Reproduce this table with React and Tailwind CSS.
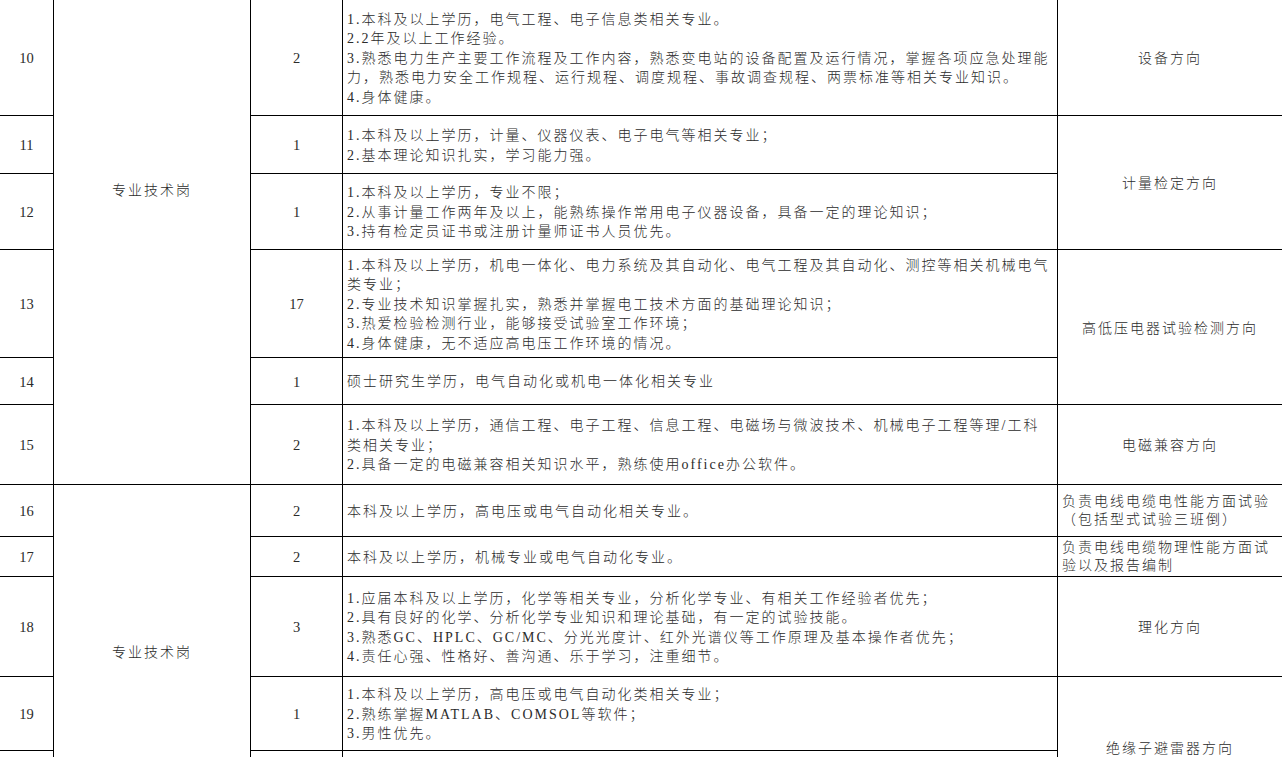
import React from "react";

const FONT = { fontFamily: '"Liberation Serif", "Noto Sans CJK SC", serif' };

const ROW_START = [
  "row-start-1",
  "row-start-2",
  "row-start-3",
  "row-start-4",
  "row-start-5",
  "row-start-6",
  "row-start-7",
  "row-start-8",
  "row-start-9",
  "row-start-10",
  "row-start-11",
];

const rows = [
  {
    no: "10",
    count: "2",
    req: [
      "1.本科及以上学历，电气工程、电子信息类相关专业。",
      "2.2年及以上工作经验。",
      "3.熟悉电力生产主要工作流程及工作内容，熟悉变电站的设备配置及运行情况，掌握各项应急处理能",
      "力，熟悉电力安全工作规程、运行规程、调度规程、事故调查规程、两票标准等相关专业知识。",
      "4.身体健康。",
    ],
  },
  {
    no: "11",
    count: "1",
    req: ["1.本科及以上学历，计量、仪器仪表、电子电气等相关专业；", "2.基本理论知识扎实，学习能力强。"],
  },
  {
    no: "12",
    count: "1",
    req: [
      "1.本科及以上学历，专业不限；",
      "2.从事计量工作两年及以上，能熟练操作常用电子仪器设备，具备一定的理论知识；",
      "3.持有检定员证书或注册计量师证书人员优先。",
    ],
  },
  {
    no: "13",
    count: "17",
    req: [
      "1.本科及以上学历，机电一体化、电力系统及其自动化、电气工程及其自动化、测控等相关机械电气",
      "类专业；",
      "2.专业技术知识掌握扎实，熟悉并掌握电工技术方面的基础理论知识；",
      "3.热爱检验检测行业，能够接受试验室工作环境；",
      "4.身体健康，无不适应高电压工作环境的情况。",
    ],
  },
  { no: "14", count: "1", req: ["硕士研究生学历，电气自动化或机电一体化相关专业"] },
  {
    no: "15",
    count: "2",
    req: [
      "1.本科及以上学历，通信工程、电子工程、信息工程、电磁场与微波技术、机械电子工程等理/工科",
      "类相关专业；",
      "2.具备一定的电磁兼容相关知识水平，熟练使用office办公软件。",
    ],
  },
  { no: "16", count: "2", req: ["本科及以上学历，高电压或电气自动化相关专业。"] },
  { no: "17", count: "2", req: ["本科及以上学历，机械专业或电气自动化专业。"] },
  {
    no: "18",
    count: "3",
    req: [
      "1.应届本科及以上学历，化学等相关专业，分析化学专业、有相关工作经验者优先；",
      "2.具有良好的化学、分析化学专业知识和理论基础，有一定的试验技能。",
      "3.熟悉GC、HPLC、GC/MC、分光光度计、红外光谱仪等工作原理及基本操作者优先；",
      "4.责任心强、性格好、善沟通、乐于学习，注重细节。",
    ],
  },
  {
    no: "19",
    count: "1",
    req: ["1.本科及以上学历，高电压或电气自动化类相关专业；", "2.熟练掌握MATLAB、COMSOL等软件；", "3.男性优先。"],
  },
  { no: "", count: "", req: [] },
];

export default function App() {
  return (
    <div className="w-[1282px] h-[757px] overflow-hidden bg-white text-[#2b2b2b]" style={FONT}>
      <div className="grid grid-cols-[53px_196px_91px_714px_224px] grid-rows-[115px_57px_75px_107px_46px_79px_51px_39px_99px_73px_68px] gap-px bg-black text-[14px] font-light">
        {rows.map((r, i) => (
          <React.Fragment key={i}>
            <div className={`col-start-1 ${ROW_START[i]} bg-white flex items-center justify-center pt-[3px] text-[14.5px]`}>{r.no}</div>
            <div className={`col-start-3 ${ROW_START[i]} bg-white flex items-center justify-center pt-[3px] text-[14.5px]`}>{r.count}</div>
            <div className={`col-start-4 ${ROW_START[i]} bg-white flex flex-col justify-center pl-[4px] pt-[2px] tracking-[2px] leading-[19.5px]`}>
              {r.req.map((l, j) => (
                <div key={j} className="whitespace-nowrap">
                  {l}
                </div>
              ))}
            </div>
          </React.Fragment>
        ))}

        <div className="col-start-2 row-start-1 row-span-6 bg-white flex justify-center pt-[181px] tracking-[2px] leading-[19px]">
          专业技术岗
        </div>
        <div className="col-start-2 row-start-7 row-span-5 bg-white flex items-center justify-center pt-[1px] tracking-[2px] leading-[19px]">
          专业技术岗
        </div>

        <div className="col-start-5 row-start-1 bg-white flex items-center justify-center pt-[2px] tracking-[2px]">设备方向</div>
        <div className="col-start-5 row-start-2 row-span-2 bg-white flex items-center justify-center pt-[1px] tracking-[2px]">计量检定方向</div>
        <div className="col-start-5 row-start-4 row-span-2 bg-white flex items-center justify-center pt-[2px] tracking-[2px]">
          高低压电器试验检测方向
        </div>
        <div className="col-start-5 row-start-6 bg-white flex items-center justify-center pt-[2px] tracking-[2px]">电磁兼容方向</div>
        <div className="col-start-5 row-start-7 bg-white flex flex-col justify-center pl-[4px] pt-[1px] tracking-[2px] leading-[18.5px]">
          <div className="whitespace-nowrap">负责电线电缆电性能方面试验</div>
          <div className="whitespace-nowrap">（包括型式试验三班倒）</div>
        </div>
        <div className="col-start-5 row-start-8 bg-white flex flex-col justify-center pl-[4px] pt-[1px] tracking-[2px] leading-[18.5px]">
          <div className="whitespace-nowrap">负责电线电缆物理性能方面试</div>
          <div className="whitespace-nowrap">验以及报告编制</div>
        </div>
        <div className="col-start-5 row-start-9 bg-white flex items-center justify-center pt-[1px] tracking-[2px]">理化方向</div>
        <div className="col-start-5 row-start-10 row-span-2 bg-white flex items-center justify-center tracking-[2px]">
          绝缘子避雷器方向
        </div>
      </div>
    </div>
  );
}
